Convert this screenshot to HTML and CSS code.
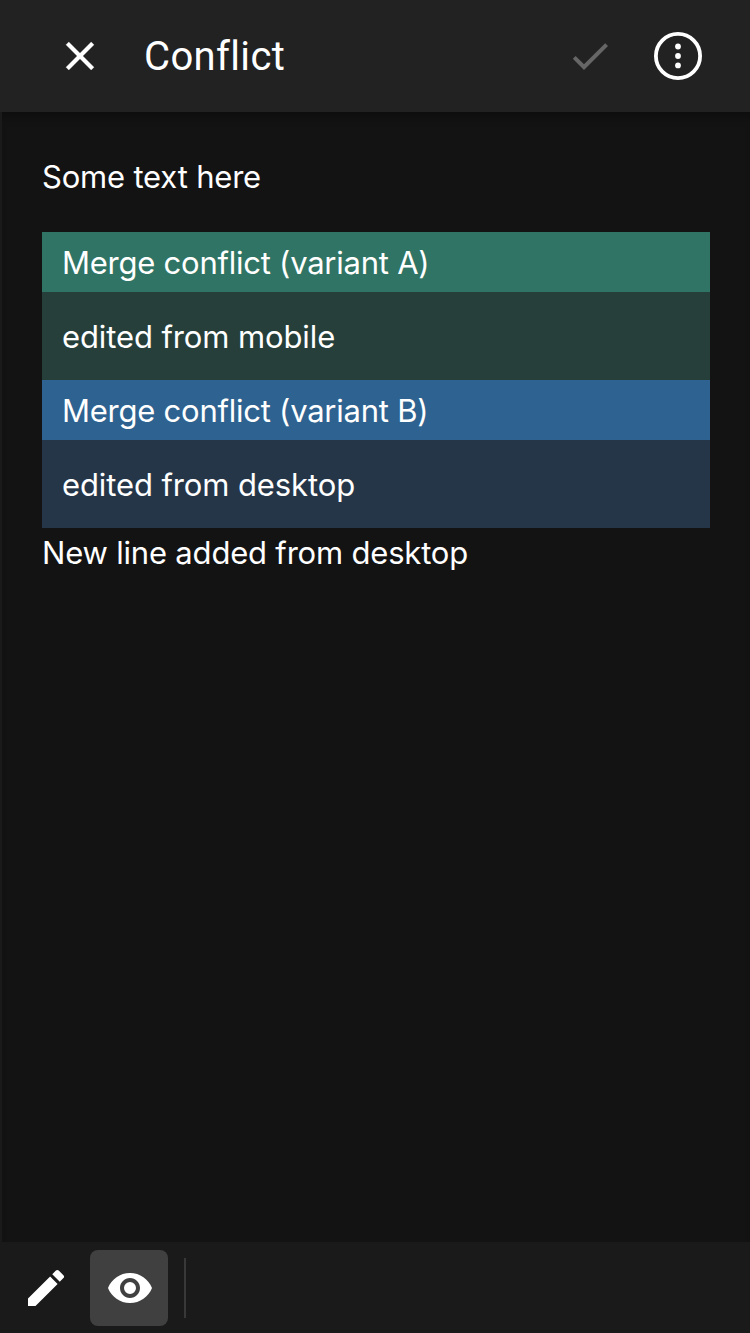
FILE: index.html
```html
<!DOCTYPE html>
<html lang="en">
<head>
<meta charset="utf-8">
<title>Conflict</title>
<link rel="stylesheet" href="styles.css">
</head>
<body>
<div class="app">
  <header class="app-bar">
    <svg class="icon icon-close" viewBox="0 0 24 24"><path d="M19 6.41 17.59 5 12 10.59 6.41 5 5 6.41 10.59 12 5 17.59 6.41 19 12 13.41 17.59 19 19 17.59 13.41 12z"/></svg>
    <h1 class="title">Conflict</h1>
    <svg class="icon icon-muted" viewBox="0 0 24 24"><path d="M9 16.17 4.83 12l-1.42 1.41L9 19 21 7l-1.41-1.41z"/></svg>
    <svg class="icon menu" viewBox="0 0 48 48"><circle class="ring" cx="24" cy="24" r="22.1"/><circle cx="24" cy="14.5" r="2.9"/><circle cx="24" cy="24" r="2.9"/><circle cx="24" cy="33.4" r="2.9"/></svg>
  </header>
  <main class="editor">
    <p class="line intro">Some text here</p>
    <section class="conflict">
      <h2 class="variant-title variant-title-a">Merge conflict (variant A)</h2>
      <p class="variant-body variant-body-a">edited from mobile</p>
      <h2 class="variant-title variant-title-b">Merge conflict (variant B)</h2>
      <p class="variant-body variant-body-b">edited from desktop</p>
    </section>
    <p class="line">New line added from desktop</p>
  </main>
  <footer class="toolbar">
    <button class="tool"><svg class="icon" viewBox="0 0 24 24"><path d="M3 17.25V21h3.75L17.81 9.94l-3.75-3.75L3 17.25zM20.71 7.04a1 1 0 0 0 0-1.41l-2.34-2.34a1 1 0 0 0-1.41 0l-1.83 1.83 3.75 3.75 1.83-1.83z"/></svg></button>
    <button class="tool tool-active"><svg class="icon" viewBox="0 0 24 24"><path d="M12 4.5C7 4.5 2.73 7.61 1 12c1.73 4.39 6 7.5 11 7.5s9.27-3.11 11-7.5c-1.73-4.39-6-7.5-11-7.5zM12 17c-2.76 0-5-2.24-5-5s2.24-5 5-5 5 2.24 5 5-2.24 5-5 5zm0-8a3 3 0 1 0 0 6 3 3 0 0 0 0-6z"/></svg></button>
    <span class="divider"></span>
  </footer>
</div>
</body>
</html>
```
FILE: styles.css
```css
* { box-sizing: border-box; }
body { margin: 0; background: #1a1a1a; color: #fff; font-family: Inter, "Liberation Sans", sans-serif; }
h1, h2, p { margin: 0; font-weight: 400; }
.app { display: flex; flex-direction: column; height: 1333px; overflow: hidden; }
.app-bar { display: flex; align-items: center; height: 112px; padding: 0 48px 0 56px; background: #222; flex: none; }
.icon { width: 48px; height: 48px; display: block; flex: none; fill: #fff; }
.icon-close { stroke: #fff; stroke-width: 0.15; }
.icon-muted { fill: #666; }
.menu { margin-left: 40px; }
.ring { fill: none; stroke: #fff; stroke-width: 3.8; }
.title { flex: 1; margin-left: 40px; padding-top: 1px; font: 400 40px/48px Roboto, sans-serif; letter-spacing: 0.35px; }
.editor { flex: 1; margin-left: 2px; padding: 40px; background: #131313; box-shadow: inset 0 10px 10px -6px #0e0e0e; font-size: 31px; line-height: 50px; letter-spacing: -0.19px; }
.intro { margin-bottom: 30px; }
.variant-title { height: 60px; padding: 6px 20px; font-size: inherit; line-height: 50px; letter-spacing: -0.24px; }
.variant-title-a { background: #2f7464; }
.variant-title-b { background: #2e6290; }
.variant-body { height: 88px; padding: 20px; letter-spacing: -0.11px; }
.variant-body-a { background: #263f3a; }
.variant-body-b { background: #253648; }
.toolbar { display: flex; align-items: center; height: 91px; padding: 8px 7px 7px; flex: none; background: #1a1a1a; }
.tool { display: flex; align-items: center; justify-content: center; width: 78px; height: 76px; margin-right: 5px; padding: 0; border: 0; border-radius: 8px; background: none; }
.tool-active { margin-right: 16px; padding-left: 2px; background: #404040; }
.divider { width: 2px; height: 60px; background: #383838; }
```
